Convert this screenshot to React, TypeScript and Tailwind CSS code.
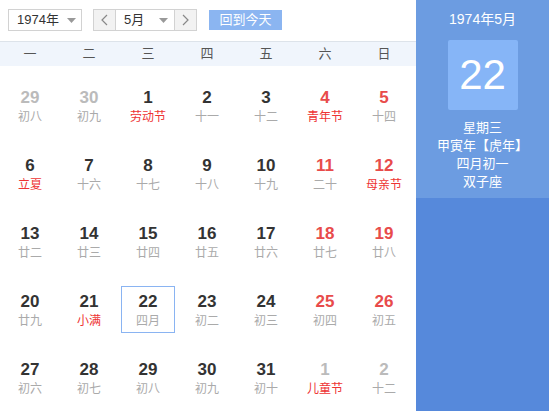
import React from "react";

type Cell = { d: number; l: string; other?: boolean; fest?: boolean; sel?: boolean };

const rows: Cell[][] = [
  [
    { d: 29, l: "初八", other: true },
    { d: 30, l: "初九", other: true },
    { d: 1, l: "劳动节", fest: true },
    { d: 2, l: "十一" },
    { d: 3, l: "十二" },
    { d: 4, l: "青年节", fest: true },
    { d: 5, l: "十四" },
  ],
  [
    { d: 6, l: "立夏", fest: true },
    { d: 7, l: "十六" },
    { d: 8, l: "十七" },
    { d: 9, l: "十八" },
    { d: 10, l: "十九" },
    { d: 11, l: "二十" },
    { d: 12, l: "母亲节", fest: true },
  ],
  [
    { d: 13, l: "廿二" },
    { d: 14, l: "廿三" },
    { d: 15, l: "廿四" },
    { d: 16, l: "廿五" },
    { d: 17, l: "廿六" },
    { d: 18, l: "廿七" },
    { d: 19, l: "廿八" },
  ],
  [
    { d: 20, l: "廿九" },
    { d: 21, l: "小满", fest: true },
    { d: 22, l: "四月", sel: true },
    { d: 23, l: "初二" },
    { d: 24, l: "初三" },
    { d: 25, l: "初四" },
    { d: 26, l: "初五" },
  ],
  [
    { d: 27, l: "初六" },
    { d: 28, l: "初七" },
    { d: 29, l: "初八" },
    { d: 30, l: "初九" },
    { d: 31, l: "初十" },
    { d: 1, l: "儿童节", other: true, fest: true },
    { d: 2, l: "十二", other: true },
  ],
];

const weekdays = ["一", "二", "三", "四", "五", "六", "日"];

function Caret() {
  return (
    <svg width="9" height="5" viewBox="0 0 9 5" className="shrink-0">
      <path d="M0 0 L9 0 L4.5 5 Z" fill="#999" />
    </svg>
  );
}

export default function App() {
  return (
    <div
      className="w-[549px] h-[411px] flex overflow-hidden bg-white"
      style={{ fontFamily: '"Liberation Sans", Arial, "Noto Sans CJK SC", sans-serif' }}
    >
      <div className="w-[416px] flex flex-col">
        <div className="h-[41px] flex items-start pt-[9px] pl-[8px]">
          <div className="w-[74px] h-[22px] border border-[#d2d2d2] flex items-center justify-between pl-[8px] pr-[5px] text-[13px] text-[#333]">
            <span>1974年</span>
            <Caret />
          </div>
          <div className="ml-[11px] h-[22px] flex border border-[#d2d2d2]">
            <div className="w-[22px] h-full bg-[#f2f2f2] flex items-center justify-center border-r border-[#d2d2d2]">
              <svg width="7" height="12" viewBox="0 0 7 12">
                <path d="M6 1 L1 6 L6 11" stroke="#888" strokeWidth="1.2" fill="none" />
              </svg>
            </div>
            <div className="w-[58px] h-full flex items-center justify-between pl-[8px] pr-[6px] text-[13px] text-[#333]">
              <span>5月</span>
              <Caret />
            </div>
            <div className="w-[22px] h-full bg-[#f2f2f2] flex items-center justify-center border-l border-[#d2d2d2]">
              <svg width="7" height="12" viewBox="0 0 7 12">
                <path d="M1 1 L6 6 L1 11" stroke="#888" strokeWidth="1.2" fill="none" />
              </svg>
            </div>
          </div>
          <div className="ml-[12px] mt-[1px] w-[73px] h-[20px] bg-[#8bb5f1] text-white text-[13px] flex items-center justify-center">
            回到今天
          </div>
        </div>
        <div className="h-[25px] border-t border-[#dde3ea] bg-[#f0f5fc] grid grid-cols-[repeat(7,54px)] gap-x-[5px] pl-[3px] items-center">
          {weekdays.map((w) => (
            <div key={w} className="text-center text-[13px] text-[#555]">
              {w}
            </div>
          ))}
        </div>
        <div className="pt-[16px] pl-[3px] grid grid-cols-[repeat(7,54px)] gap-x-[5px] gap-y-[21px]">
          {rows.flat().map((c, i) => {
            const col = i % 7;
            const weekend = col >= 5;
            const numColor = c.other ? "text-[#bbbbbb]" : weekend ? "text-[#e84b4b]" : "text-[#333333]";
            const lunarColor = c.fest ? "text-[#ee3333]" : "text-[#aaaaaa]";
            return (
              <div
                key={i}
                className={
                  "h-[47px] flex flex-col items-center pt-[5px] " +
                  (c.sel ? "border border-[#8ab4f2]" : "border border-transparent")
                }
              >
                <div className={"h-[20px] leading-[20px] text-[17px] font-bold " + numColor}>{c.d}</div>
                <div className={"h-[18px] leading-[18px] text-[12px] " + lunarColor}>{c.l}</div>
              </div>
            );
          })}
        </div>
      </div>
      <div className="flex-1 flex flex-col bg-[#5689db]">
        <div className="h-[198px] bg-[#6c9ce1] flex flex-col items-center">
          <div className="mt-[9px] text-[14px] text-white leading-[20px]">1974年5月</div>
          <div className="mt-[11px] w-[70px] h-[70px] bg-[#86b5f7] rounded-[2px] flex items-center justify-center text-white text-[42px] leading-none">
            22
          </div>
          <div className="mt-[9px] flex flex-col items-center text-white text-[13px] leading-[18px]">
            <div>星期三</div>
            <div>甲寅年【虎年】</div>
            <div>四月初一</div>
            <div>双子座</div>
          </div>
        </div>
      </div>
    </div>
  );
}
